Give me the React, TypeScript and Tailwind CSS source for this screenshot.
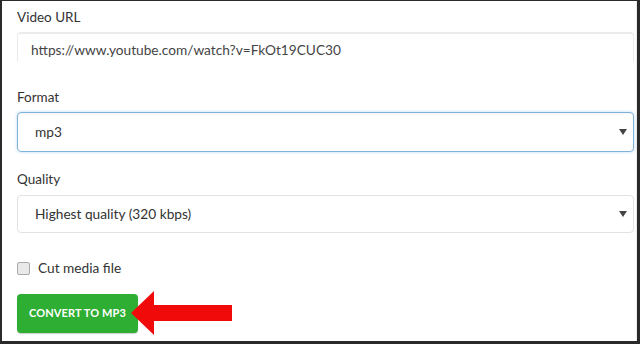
import React from "react";

export default function App() {
  const font = { fontFamily: "Lato, 'Open Sans', sans-serif" };
  return (
    <div
      className="w-[640px] h-[344px] bg-[#2a2a2a] pt-[1px] pl-[2px] pr-[3px] pb-[3px] overflow-hidden"
      style={font}
    >
      <div className="relative w-full h-full bg-white pl-[15px] pr-[2px] text-[#333] border-r border-[#ececec]">
        <div className="pt-[7px] text-[13.5px] leading-[18px]">Video URL</div>
        <div className="mt-[6px] h-[30px] border-t-2 border-x border-[#ebebeb] rounded-t-[4px] pl-[13px] pt-[7px] text-[13.7px] leading-[18px] text-[#444]">
          https://www.youtube.com/watch?v=FkOt19CUC30
        </div>
        <div className="mt-[26px] text-[13.5px] leading-[18px]">Format</div>
        <div className="mt-[6px] h-[40px] border border-[#7fb3d8] rounded-[4px] flex items-center justify-between pl-[17px] pr-[5px] text-[13.7px] shadow-[inset_0_1px_1px_rgba(0,0,0,0.05),0_0_3px_rgba(102,175,233,0.5)]">
          <span>mp3</span>
          <svg width="10" height="8" viewBox="0 0 10 8">
            <path d="M1 1 L9 1 L5 7 Z" fill="#444" />
          </svg>
        </div>
        <div className="mt-[18px] text-[13.5px] leading-[18px]">Quality</div>
        <div className="mt-[7px] h-[38px] border border-[#e2e2e2] rounded-[4px] flex items-center justify-between pl-[17px] pr-[5px] text-[13.7px]">
          <span>Highest quality (320 kbps)</span>
          <svg width="10" height="8" viewBox="0 0 10 8">
            <path d="M1 1 L9 1 L5 7 Z" fill="#444" />
          </svg>
        </div>
        <div className="mt-[26px] flex items-center gap-[8px] text-[13.7px] leading-[18px]">
          <span className="w-[13px] h-[13px] border border-[#aaa] rounded-[2px] bg-[#e9e9e9]" />
          <span>Cut media file</span>
        </div>
        <div className="mt-[14px] flex items-center">
          <div className="w-[121px] h-[39px] bg-[#2fae34] rounded-[4px] flex items-center justify-center text-white text-[11px] font-bold tracking-[0.1px] shadow-[0_1px_1px_rgba(0,0,0,0.2)]">
            CONVERT TO MP3
          </div>
          <svg width="104" height="44" viewBox="0 0 104 44" className="-ml-[8px]">
            <path d="M1 22 L24 0 L24 14 L102 14 L102 30 L24 30 L24 44 Z" fill="#f00a0a" />
          </svg>
        </div>
      </div>
    </div>
  );
}
